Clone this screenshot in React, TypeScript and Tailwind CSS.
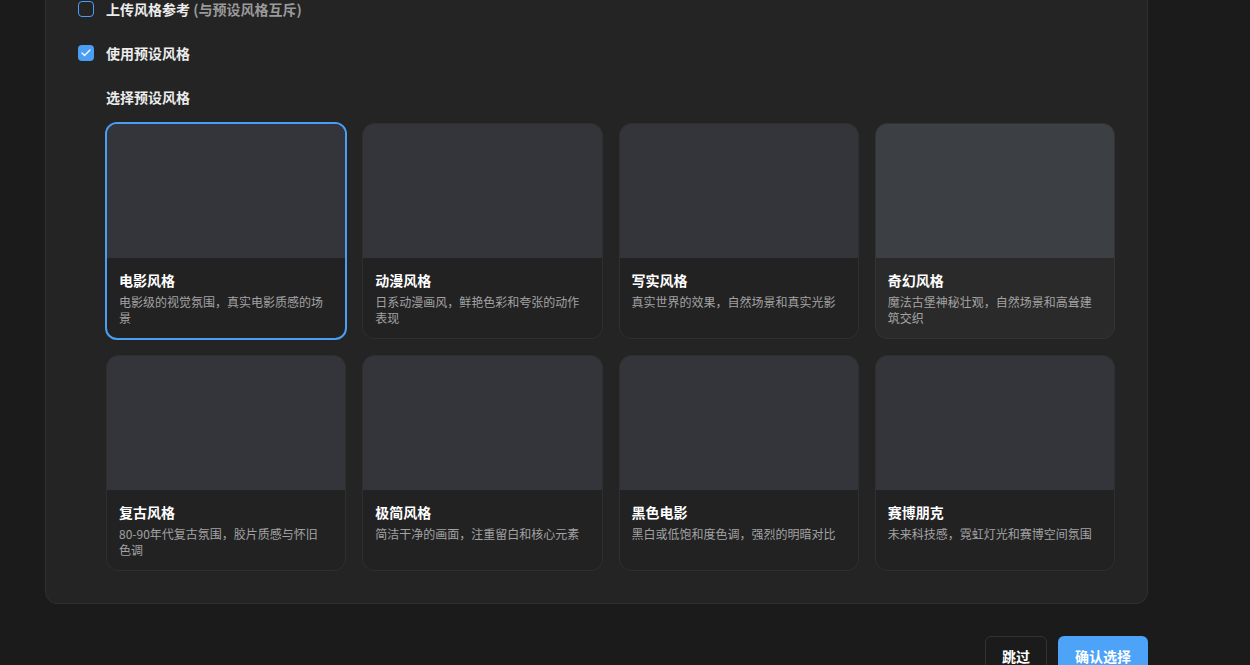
import { Check } from 'lucide-react';

const styles = [
  { name: '电影风格', desc: '电影级的视觉氛围，真实电影质感的场景' },
  { name: '动漫风格', desc: '日系动漫画风，鲜艳色彩和夸张的动作表现' },
  { name: '写实风格', desc: '真实世界的效果，自然场景和真实光影' },
  { name: '奇幻风格', desc: '魔法古堡神秘壮观，自然场景和高耸建筑交织' },
  { name: '复古风格', desc: '80-90年代复古氛围，胶片质感与怀旧色调' },
  { name: '极简风格', desc: '简洁干净的画面，注重留白和核心元素' },
  { name: '黑色电影', desc: '黑白或低饱和度色调，强烈的明暗对比' },
  { name: '赛博朋克', desc: '未来科技感，霓虹灯光和赛博空间氛围' },
];

export default function App() {
  const selected = 0;
  const hovered = 3;

  return (
    <div
      className="min-h-screen overflow-hidden bg-[#1b1b1b] text-white"
      style={{ fontFamily: '"Noto Sans CJK SC", "Noto Sans", sans-serif' }}
    >
      <div className="-mt-[34px] ml-[45px] w-[1103px]">
        {/* Options panel */}
        <div className="rounded-xl border border-[#2f2f2f] bg-[#242424] p-8">
          <div className="flex flex-col gap-6">
            <label className="flex h-5 items-center gap-3">
              <span className="h-4 w-4 rounded-[4px] border-[1.5px] border-[#4a9ff5] bg-transparent" />
              <span className="text-sm font-semibold leading-5 text-[#ececec]">
                上传风格参考 <span className="text-[#9a9a9a]">(与预设风格互斥)</span>
              </span>
            </label>

            <label className="flex h-5 items-center gap-3">
              <span className="flex h-4 w-4 items-center justify-center rounded-[4px] bg-[#4a9ff5]">
                <Check className="h-3 w-3 text-white" strokeWidth={2.5} />
              </span>
              <span className="text-sm font-semibold leading-5 text-[#ececec]">使用预设风格</span>
            </label>

            <div className="pl-7">
              <h3 className="mb-4 text-sm font-semibold leading-5 text-[#ececec]">选择预设风格</h3>
              <div className="grid grid-cols-4 gap-4">
                {styles.map((s, i) => {
                  const isSel = i === selected;
                  const isHover = i === hovered;
                  return (
                    <div
                      key={s.name}
                      className={`overflow-hidden rounded-xl ${
                        isSel
                          ? '-m-px border-2 border-[#4a9ff5] bg-[#222223]'
                          : isHover
                            ? 'border border-[#333333] bg-[#2a2a2a]'
                            : 'border border-[#2f2f2f] bg-[#222223]'
                      }`}
                    >
                      <div className={`aspect-video ${isHover ? 'bg-[#3c3f44]' : 'bg-[#33353a]'}`} />
                      <div className="pb-3 pl-3 pr-4 pt-3">
                        <div className="text-sm font-semibold leading-5 text-white">{s.name}</div>
                        <div className="mt-1 text-xs leading-4 text-[#a3a3a3]">{s.desc}</div>
                      </div>
                    </div>
                  );
                })}
              </div>
            </div>
          </div>
        </div>

        {/* Footer actions */}
        <div className="mt-8 flex justify-end gap-3">
          <button className="-mr-px h-10 rounded-md border border-[#333333] bg-[#1b1b1b] px-4 text-sm font-semibold text-white">
            跳过
          </button>
          <button className="h-10 rounded-md bg-[#4ca3f8] px-[17px] text-sm font-semibold text-white">
            确认选择
          </button>
        </div>
      </div>
    </div>
  );
}
